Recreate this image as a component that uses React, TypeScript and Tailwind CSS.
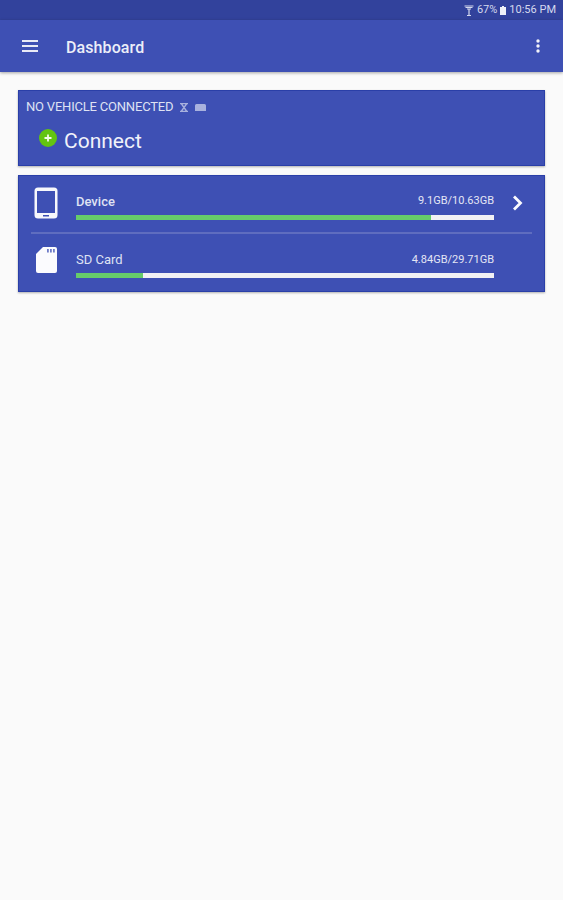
const font = { fontFamily: 'Roboto, sans-serif' };

function StorageBar({ percent }: { percent: number }) {
  return (
    <div className="h-[5px] w-[418px] bg-[#f1f1f4]">
      <div className="h-full bg-[#66cc6a]" style={{ width: `${percent}%` }} />
    </div>
  );
}

export default function App() {
  return (
    <div style={font} className="flex min-h-[900px] w-[563px] flex-col bg-[#fafafa]">
      {/* status bar */}
      <div className="flex h-[20px] items-center justify-end bg-[#32429c] pr-[7px] text-[11px] text-[#d5d9ee]">
        <svg width="10" height="11" viewBox="0 0 10 11" className="mr-[3px]" fill="none" stroke="#d5d9ee" strokeWidth="1.200">
          <path d="M0.500 1h9M1.500 2.500h7M3 4h4M5 4v6.500M3 10.500h4" />
        </svg>
        <span>67%</span>
        <svg width="6" height="9" viewBox="0 0 6 9" className="mx-[3px]" fill="#eef0f8">
          <path d="M2 0h2v1h2v8H0V1h2z" />
        </svg>
        <span>10:56 PM</span>
      </div>

      {/* app bar */}
      <div className="flex h-[52px] items-center bg-[#3e50b4] shadow-[0_1px_3px_rgba(0,0,0,0.35)]">
        <svg width="16" height="12" viewBox="0 0 16 12" className="ml-[22px]" fill="#e8eaf6">
          <path d="M0 0h16v2H0zM0 5h16v2H0zM0 10h16v2H0z" />
        </svg>
        <span className="ml-[28px] pt-[3px] text-[16px] font-medium tracking-[0.1px] text-[#eceef8]">Dashboard</span>
        <svg width="4" height="14" viewBox="0 0 4 14" className="ml-auto mr-[23px]" fill="#f2f3fa">
          <circle cx="2" cy="2" r="1.700" />
          <circle cx="2" cy="7" r="1.700" />
          <circle cx="2" cy="12" r="1.700" />
        </svg>
      </div>

      <div className="flex flex-col gap-[9px] px-[18px] pt-[18px]">
        {/* connection card */}
        <div className="h-[76px] border border-[#2a3fa8] bg-[#3e50b4] pl-[7px] shadow-[0_1px_2px_rgba(0,0,0,0.3)]">
          <div className="mt-[8px] flex h-[16px] items-center text-[13px] text-[#dfe2f3]">
            <span className="tracking-[-0.2px]">NO VEHICLE CONNECTED</span>
            <svg width="10" height="9" viewBox="0 0 10 9" className="ml-[6px]" fill="none" stroke="#a9b2de" strokeWidth="1.300">
              <path d="M1 0.700h8M1 8.300h8M2.500 1l5 7M7.500 1l-5 7" />
            </svg>
            <svg width="11" height="7" viewBox="0 0 11 7" className="ml-[6px]" fill="#a9b2de">
              <path d="M1.500 0h8A1.500 1.500 0 0 1 11 1.500V7H0V1.500A1.500 1.500 0 0 1 1.500 0z" />
            </svg>
          </div>
          <div className="mt-[12px] flex items-center pl-[13px]">
            <svg width="18" height="18" viewBox="0 0 18 18" className="mb-[6px]">
              <circle cx="9" cy="9" r="9" fill="#63c411" />
              <path d="M9 5.500v7M5.500 9h7" stroke="#f4fbe9" strokeWidth="1.800" />
            </svg>
            <span className="ml-[7px] text-[21px] leading-[28px] text-[#f1f2fa]">Connect</span>
          </div>
        </div>

        {/* storage card */}
        <div className="h-[117px] border border-[#2a3fa8] bg-[#3e50b4] px-[12px] shadow-[0_1px_2px_rgba(0,0,0,0.3)]">
          <div className="flex h-[56px] items-center">
            <svg width="24" height="32" viewBox="0 0 24 32" className="ml-[3px] mt-[-3px]">
              <rect x="0.500" y="0.500" width="23" height="31" rx="3.500" fill="#f7f8fc" />
              <rect x="3" y="4" width="18" height="22" fill="#3e50b4" />
              <rect x="9" y="28" width="6" height="1.500" fill="#3e50b4" />
            </svg>
            <div className="ml-[18px] flex w-[418px] flex-col pt-[4px]">
              <div className="flex h-[18px] items-center justify-between">
                <span className="text-[13px] font-medium text-[#dfe2f3]">Device</span>
                <span className="text-[11px] text-[#e4e6f5]">9.1GB/10.63GB</span>
              </div>
              <div className="mt-[4px]">
                <StorageBar percent={85} />
              </div>
            </div>
            <svg width="12" height="16" viewBox="0 0 12 16" className="ml-[18px] mt-[-3px]" fill="none" stroke="#fbfbfe" strokeWidth="2.800">
              <path d="M2 1.500L8.500 8 2 14.500" />
            </svg>
          </div>
          <div className="h-[2px] bg-[#5f6dbf]" />
          <div className="flex h-[57px] items-center">
            <svg width="21" height="26" viewBox="0 0 21 26" className="ml-[5px] mt-[-5px]">
              <path d="M7 0h12a2 2 0 0 1 2 2v22a2 2 0 0 1-2 2H2a2 2 0 0 1-2-2V7z" fill="#fbfbfe" />
              <path d="M11 2h1.800v3.500H11zM14 2h1.800v3.500H14zM17 2h1.800v3.500H17z" fill="#6f7cc8" />
            </svg>
            <div className="ml-[19px] flex w-[418px] flex-col pt-[4px]">
              <div className="flex h-[18px] items-center justify-between">
                <span className="text-[13px] text-[#dfe2f3]">SD Card</span>
                <span className="text-[11px] text-[#e4e6f5]">4.84GB/29.71GB</span>
              </div>
              <div className="mt-[4px]">
                <StorageBar percent={16} />
              </div>
            </div>
          </div>
        </div>
      </div>
    </div>
  );
}
